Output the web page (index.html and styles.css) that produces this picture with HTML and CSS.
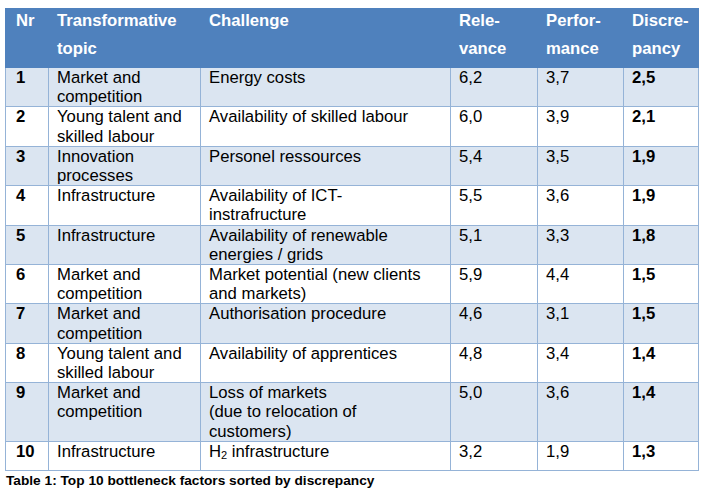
FILE: index.html
```html
<!DOCTYPE html>
<html>
<head>
<meta charset="utf-8">
<link rel="stylesheet" href="styles.css">
</head>
<body>
<div class="page">
<table class="tbl">
  <colgroup>
    <col class="c-nr"><col class="c-topic"><col class="c-ch"><col class="c-rel"><col class="c-perf"><col class="c-disc">
  </colgroup>
  <thead>
    <tr>
      <th class="nr"><span class="hl">Nr</span></th>
      <th><span class="hl">Transformative</span><span class="hl">topic</span></th>
      <th><span class="hl">Challenge</span></th>
      <th><span class="hl">Rele-</span><span class="hl">vance</span></th>
      <th><span class="hl">Perfor-</span><span class="hl">mance</span></th>
      <th><span class="hl">Discre-</span><span class="hl">pancy</span></th>
    </tr>
  </thead>
  <tbody>
    <tr class="alt"><td class="nr">1</td><td>Market and<br>competition</td><td>Energy costs</td><td>6,2</td><td>3,7</td><td class="b">2,5</td></tr>
    <tr><td class="nr">2</td><td>Young talent and<br>skilled labour</td><td>Availability of skilled labour</td><td>6,0</td><td>3,9</td><td class="b">2,1</td></tr>
    <tr class="alt"><td class="nr">3</td><td>Innovation<br>processes</td><td>Personel ressources</td><td>5,4</td><td>3,5</td><td class="b">1,9</td></tr>
    <tr><td class="nr">4</td><td>Infrastructure</td><td>Availability of ICT-<br>instrafructure</td><td>5,5</td><td>3,6</td><td class="b">1,9</td></tr>
    <tr class="alt"><td class="nr">5</td><td>Infrastructure</td><td>Availability of renewable<br>energies / grids</td><td>5,1</td><td>3,3</td><td class="b">1,8</td></tr>
    <tr><td class="nr">6</td><td>Market and<br>competition</td><td>Market potential (new clients<br>and markets)</td><td>5,9</td><td>4,4</td><td class="b">1,5</td></tr>
    <tr class="alt"><td class="nr">7</td><td>Market and<br>competition</td><td>Authorisation procedure</td><td>4,6</td><td>3,1</td><td class="b">1,5</td></tr>
    <tr><td class="nr">8</td><td>Young talent and<br>skilled labour</td><td>Availability of apprentices</td><td>4,8</td><td>3,4</td><td class="b">1,4</td></tr>
    <tr class="alt"><td class="nr">9</td><td>Market and<br>competition</td><td>Loss of markets<br>(due to relocation of<br>customers)</td><td>5,0</td><td>3,6</td><td class="b">1,4</td></tr>
    <tr class="last"><td class="nr">10</td><td>Infrastructure</td><td>H<sub>2</sub> infrastructure</td><td>3,2</td><td>1,9</td><td class="b">1,3</td></tr>
  </tbody>
</table>
<div class="caption">Table 1: Top 10 bottleneck factors sorted by discrepancy</div>
</div>
</body>
</html>
```

FILE: styles.css
```css
html, body {
  margin: 0;
  padding: 0;
  background: #ffffff;
}
.page {
  padding: 8px 0 0 5px;
  font-family: "Liberation Sans", Arial, sans-serif;
  color: #000000;
}
.tbl {
  border-collapse: collapse;
  table-layout: fixed;
  width: 693px;
  font-size: 16.7px;
}
.c-nr { width: 43px; }
.c-topic { width: 152px; }
.c-ch { width: 250px; }
.c-rel { width: 87px; }
.c-perf { width: 86px; }
.c-disc { width: 75px; }

.tbl th {
  background: #4f81bd;
  color: #ffffff;
  font-weight: bold;
  text-align: left;
  vertical-align: top;
  padding: 2px 8px 0 8px;
  border: 1px solid #4f81bd;
}
.hl {
  display: block;
  line-height: 19.2px;
  margin-bottom: 8.8px;
}
.tbl td {
  vertical-align: top;
  padding: 0 8px;
  line-height: 19.2px;
  border: 1px solid #95b3d7;
}
.tbl th.nr, .tbl td.nr {
  padding-left: 10px;
  padding-right: 4px;
}
.tbl td.nr, .tbl td.b {
  font-weight: bold;
}
.tbl tr.alt td {
  background: #dbe5f1;
}
.tbl tr.last td {
  padding-bottom: 8.6px;
}
.tbl sub {
  font-size: 11px;
  line-height: 0;
  vertical-align: -2px;
}
.caption {
  font-size: 13.7px;
  font-weight: bold;
  margin-top: 2px;
  margin-left: 1px;
  line-height: 16px;
}
```
